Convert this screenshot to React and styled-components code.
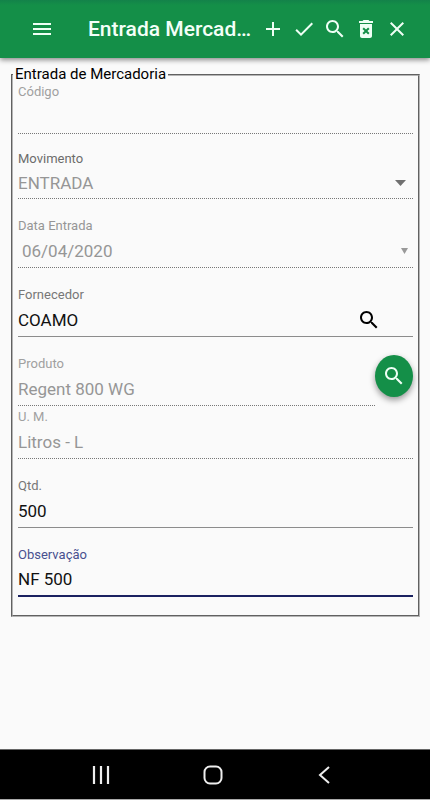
import React from "react";
import styled, { createGlobalStyle } from "styled-components";

const GlobalStyle = createGlobalStyle`
  *, *::before, *::after { box-sizing: border-box; }
  body {
    margin: 0;
    background: #fafafa;
    color: #000;
    font-family: Roboto, "Liberation Sans", sans-serif;
  }
  button, input, select { font: inherit; margin: 0; }
`;

const Page = styled.div`
  min-height: 100vh;
  display: flex;
  flex-direction: column;
`;

const Toolbar = styled.header`
  display: flex;
  align-items: center;
  height: 58px;
  padding: 0 18px 0 26px;
  background: linear-gradient(#13824a, #148f48 5px);
  box-shadow: 0 2px 5px rgba(0, 0, 0, 0.45);
`;

const Title = styled.h1`
  flex: 1;
  min-width: 0;
  margin: 0 2px 0 30px;
  overflow: hidden;
  color: #f4fff8;
  font-size: 21px;
  line-height: 28px;
  font-weight: 500;
  white-space: nowrap;
  text-overflow: ellipsis;
`;

const Actions = styled.div`
  display: flex;
`;

const IconButton = styled.button`
  display: flex;
  align-items: center;
  justify-content: center;
  flex: none;
  width: ${(p) => p.$width || 32}px;
  height: 32px;
  padding: 0;
  border: 0;
  background: none;
  color: ${(p) => p.$color || "#effff5"};
`;

const RoundButton = styled(IconButton)`
  width: 38px;
  height: 42px;
  border-radius: 50%;
  background: #148f48;
  box-shadow: 0 3px 6px rgba(0, 0, 0, 0.4);
`;

const Form = styled.form`
  flex: 1;
  padding: 8px 10px 16px 11px;
`;

const Group = styled.fieldset`
  min-width: 0;
  margin: 0;
  padding: 0 5px 18px;
  border: 2px groove #b5b5b5;
`;

const Legend = styled.legend`
  padding: 0 2px;
  margin-left: -5px;
  font-size: 15px;
  line-height: 17px;
`;

const Fields = styled.div`
  display: flex;
  flex-direction: column;
`;

const Field = styled.div`
  display: flex;
  flex-direction: column;
  flex: 1;
  min-width: 0;
  margin-top: ${(p) => p.$gap || 0}px;
`;

const Label = styled.label`
  color: ${(p) => p.$color || "#777"};
  font-size: 13px;
  line-height: 17px;
`;

const Control = styled.div`
  display: flex;
  align-items: center;
  height: ${(p) => p.$height || 34}px;
  border-bottom: ${(p) => p.$line || "1px dotted #777"};
`;

const Input = styled.input`
  flex: 1;
  min-width: 0;
  width: 100%;
  height: 24px;
  padding: 0 0 0 ${(p) => p.$indent || 0}px;
  border: 0;
  outline: 0;
  background: none;
  color: #111;
  font-size: 17px;
  line-height: 24px;
  &:disabled { color: #969696; }
`;

const Select = styled.select`
  flex: 1;
  min-width: 0;
  height: 24px;
  padding: 0;
  border: 0;
  appearance: none;
  background: none;
  color: #969696;
  font-size: 17px;
  line-height: 24px;
  opacity: 1;
`;

const ProductRow = styled.div`
  display: flex;
  align-items: flex-start;
  margin-top: 18px;
`;

const Arrow = styled.svg`
  flex: none;
  margin-right: ${(p) => p.$right}px;
`;

const SystemBar = styled.nav`
  display: flex;
  align-items: center;
  justify-content: space-between;
  height: 51px;
  padding: 0 90px 0 85px;
  border-top: 1px solid #666;
  border-bottom: 1px solid #aaa;
  background: #000;
`;

const paths = {
  menu: "M3 18h18v-2H3v2zm0-5h18v-2H3v2zm0-7v2h18V6H3z",
  add: "M19 13h-6v6h-2v-6H5v-2h6V5h2v6h6v2z",
  check: "M9 16.17L4.83 12l-1.42 1.41L9 19 21 7l-1.41-1.41z",
  search:
    "M15.5 14h-.79l-.28-.27C15.41 12.59 16 11.11 16 9.5 16 5.91 13.09 3 9.5 3S3 5.91 3 9.5 5.91 16 9.5 16c1.61 0 3.09-.59 4.23-1.57l.27.28v.79l5 4.99L20.49 19l-4.99-5zm-6 0C7.01 14 5 11.99 5 9.5S7.01 5 9.5 5 14 7.01 14 9.5 11.99 14 9.5 14z",
  remove:
    "M6 19c0 1.1.9 2 2 2h8c1.1 0 2-.9 2-2V7H6v12zm2.46-7.12l1.41-1.41L12 12.59l2.12-2.12 1.41 1.41L13.41 14l2.12 2.12-1.41 1.41L12 15.41l-2.12 2.12-1.41-1.41L10.59 14l-2.13-2.12zM15.5 4l-1-1h-5l-1 1H5v2h14V4z",
  close:
    "M19 6.41L17.59 5 12 10.59 6.41 5 5 6.41 10.59 12 5 17.59 6.41 19 12 13.41 17.59 19 19 17.59 13.41 12z",
};

function Icon({ name, size = 24 }) {
  return (
    <svg width={size} height={size} viewBox="0 0 24 24" fill="currentColor" aria-hidden="true">
      <path d={paths[name]} />
    </svg>
  );
}

const actions = [
  ["add", "Adicionar"],
  ["check", "Confirmar"],
  ["search", "Pesquisar"],
  ["remove", "Excluir"],
  ["close", "Fechar"],
];

function TextField({ id, label, labelColor, gap, line, indent, value, disabled, children }) {
  return (
    <Field $gap={gap}>
      <Label htmlFor={id} $color={labelColor}>{label}</Label>
      <Control $line={line}>
        <Input id={id} defaultValue={value} disabled={disabled} $indent={indent} />
        {children}
      </Control>
    </Field>
  );
}

export default function App() {
  return (
    <Page>
      <GlobalStyle />
      <Toolbar>
        <IconButton type="button" aria-label="Menu"><Icon name="menu" /></IconButton>
        <Title>Entrada Mercadoria</Title>
        <Actions>
          {actions.map(([name, label]) => (
            <IconButton key={name} type="button" aria-label={label} $width={31}><Icon name={name} /></IconButton>
          ))}
        </Actions>
      </Toolbar>
      <Form>
        <Group>
          <Legend>Entrada de Mercadoria</Legend>
          <Fields>
            <TextField id="codigo" label="Código" labelColor="#a0a0a0" disabled />
            <Field $gap={16}>
              <Label htmlFor="movimento" $color="#6c6c6c">Movimento</Label>
              <Control $height={32}>
                <Select id="movimento" disabled><option>ENTRADA</option></Select>
                <Arrow $right={7} width="11" height="6" viewBox="0 0 11 6" aria-hidden="true">
                  <path d="M0 0h11L5.500 6z" fill="#707070" />
                </Arrow>
              </Control>
            </Field>
            <TextField id="data" label="Data Entrada" labelColor="#969696" gap={18} indent={4} value="06/04/2020" disabled>
              <Arrow $right={5} width="7" height="6" viewBox="0 0 7 6" aria-hidden="true">
                <path d="M0 0h7L3.500 6z" fill="#999" />
              </Arrow>
            </TextField>
            <TextField id="fornecedor" label="Fornecedor" gap={18} line="1px solid #8c8c8c" value="COAMO">
              <IconButton type="button" aria-label="Pesquisar fornecedor" $width={88} $color="#000"><Icon name="search" /></IconButton>
            </TextField>
            <ProductRow>
              <TextField id="produto" label="Produto" labelColor="#a0a0a0" value="Regent 800 WG" disabled />
              <RoundButton type="button" aria-label="Pesquisar produto"><Icon name="search" /></RoundButton>
            </ProductRow>
            <TextField id="um" label="U. M." labelColor="#a0a0a0" gap={2} value="Litros - L" disabled />
            <TextField id="qtd" label="Qtd." gap={18} line="1px solid #8c8c8c" value="500" />
            <TextField id="obs" label="Observação" labelColor="#48508f" gap={18} line="2px solid #1a2160" value="NF 500" />
          </Fields>
        </Group>
      </Form>
      <SystemBar aria-label="Sistema">
        <IconButton type="button" aria-label="Recentes">
          <svg width="18" height="18" viewBox="0 0 18 18" stroke="#eee" strokeWidth="2.200" aria-hidden="true">
            <path d="M2 0v18M9 0v18M16 0v18" />
          </svg>
        </IconButton>
        <IconButton type="button" aria-label="Início">
          <svg width="20" height="20" viewBox="0 0 20 20" fill="none" stroke="#eee" strokeWidth="2" aria-hidden="true">
            <rect x="1.500" y="1.500" width="17" height="17" rx="5.500" />
          </svg>
        </IconButton>
        <IconButton type="button" aria-label="Voltar">
          <svg width="12" height="18" viewBox="0 0 12 18" fill="none" stroke="#eee" strokeWidth="2" aria-hidden="true">
            <path d="M11 1L2 9l9 8" />
          </svg>
        </IconButton>
      </SystemBar>
    </Page>
  );
}
